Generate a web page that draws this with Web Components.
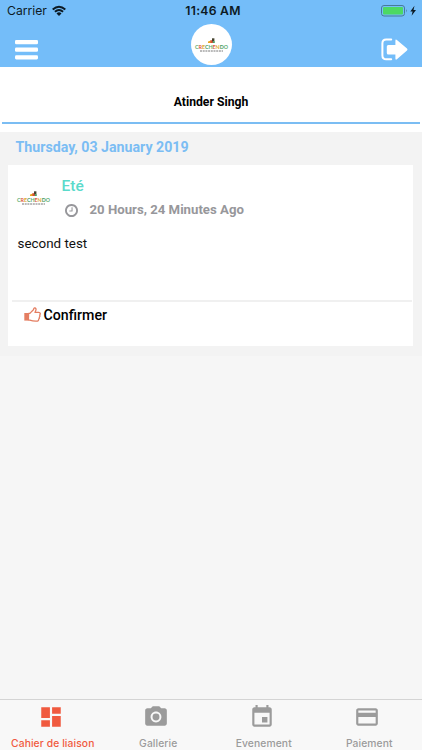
<!DOCTYPE html>
<html lang="fr">
<head>
<meta charset="utf-8">
<title>Crechendo</title>
<style>
body {
	margin: 0;
	font-family: Roboto, sans-serif;
	background: #f6f6f6;
}
</style>
</head>
<body>
<cr-screen>
	<cr-header slot="header" carrier="Carrier" time="11:46 AM"></cr-header>
	<cr-child-tab>Atinder Singh</cr-child-tab>
	<cr-day date="Thursday, 03 January 2019">
		<cr-post name="Eté" ago="20 Hours, 24 Minutes Ago" action="Confirmer">second test</cr-post>
	</cr-day>
	<cr-tabs slot="footer">
		<cr-tab icon="dashboard" active>Cahier de liaison</cr-tab>
		<cr-tab icon="camera">Gallerie</cr-tab>
		<cr-tab icon="event">Evenement</cr-tab>
		<cr-tab icon="card">Paiement</cr-tab>
	</cr-tabs>
</cr-screen>

<script>
(() => {
	const ICONS = {
		wifi: `<svg viewBox="0 0 14 10"><path d="M0.7 3.5Q7-2.1 13.3 3.5M2.9 5.8Q7 2.2 11.1 5.8" fill="none" stroke="currentColor" stroke-width="1.9"/><path d="M4.5 7.4Q7 5.3 9.5 7.4L7 10z"/></svg>`,
		battery: `<svg viewBox="0 0 36 12"><rect x=".5" y=".5" width="23" height="10.5" rx="2.5" fill="none" stroke="#477b99"/><rect x="2" y="2" width="20" height="7.5" rx="1" fill="#4cd964"/><path d="M25 4q1.5 1.7 0 3.5z" fill="#477b99"/><path d="M33.5.8 29.3 6.4h2.3l-1 4.4 4.4-5.8h-2.5z"/></svg>`,
		menu: `<svg viewBox="0 0 23 20"><rect width="23" height="4.2" rx="1.3"/><rect y="7.6" width="23" height="4.2" rx="1.3"/><rect y="15.2" width="23" height="4.2" rx="1.3"/></svg>`,
		logout: `<svg viewBox="0 0 27 23"><path d="M10.2 1.6H5.2Q1.4 1.6 1.4 5.4v12Q1.4 21.2 5.2 21.2h5" fill="none" stroke="currentColor" stroke-width="2" stroke-linecap="round"/><path d="M5.8 8.4q0-1.5 1.5-1.5h7.1V2.8q0-2 1.5-.8L26 10.4q1 1 0 2l-10.1 8.9q-1.5 1-1.5-.8v-4.1H7.3q-1.5 0-1.5-1.5z"/></svg>`,
		clock: `<svg viewBox="128 128 1536 1536"><path d="M1024 544v448q0 14-9 23t-23 9h-320q-14 0-23-9t-9-23v-64q0-14 9-23t23-9h224v-352q0-14 9-23t23-9h64q14 0 23 9t9 23zm416 352q0-148-73-273t-198-198-273-73-273 73-198 198-73 273 73 273 198 198 273 73 273-73 198-198 73-273zm224 0q0 209-103 385.5t-279.5 279.5-385.5 103-385.5-103-279.5-279.5-103-385.5 103-385.5 279.5-279.5 385.5-103 385.5 103 279.5 279.5 103 385.5z"/></svg>`,
		thumb: `<svg viewBox="0 0 17 15"><path d="M.3 6h3.9v7.6H.3z"/><path d="M4.6 6.4h1.2c1.4-1 2-2.3 3.4-3.4.6-.6.4-2.1 1.3-2.2 1.6-.1 1.8 1.6 1.3 2.7l-.8 1.9h3.8c1.7 0 2 2 .8 2.6.6.8.4 1.7-.3 2.2.3.8.1 1.5-.6 1.9.1 1.5-.8 2-2.2 2-3.1.1-4.7-.3-6.7-1H4.4z" fill="none" stroke="currentColor" stroke-width="1.3" stroke-linejoin="round"/></svg>`,
		dashboard: `<svg viewBox="0 0 24 24"><path d="M3 13h8V3H3v10zm0 8h8v-6H3v6zm10 0h8V11h-8v10zm0-18v6h8V3h-8z"/></svg>`,
		camera: `<svg viewBox="0 0 24 24"><circle cx="12" cy="12" r="3.2"/><path d="M9 2 7.17 4H4c-1.1 0-2 .9-2 2v12c0 1.1.9 2 2 2h16c1.1 0 2-.9 2-2V6c0-1.1-.9-2-2-2h-3.17L15 2H9zm3 15c-2.76 0-5-2.24-5-5s2.24-5 5-5 5 2.24 5 5-2.24 5-5 5z"/></svg>`,
		event: `<svg viewBox="0 0 24 24"><path d="M17 12h-5v5h5v-5zM16 1v2H8V1H6v2H5c-1.11 0-1.99.9-1.99 2L3 19c0 1.1.89 2 2 2h14c1.1 0 2-.9 2-2V5c0-1.1-.9-2-2-2h-1V1h-2zm3 18H5V8h14v11z"/></svg>`,
		card: `<svg viewBox="0 0 24 24"><path d="M20 4H4c-1.11 0-1.99.89-1.99 2L2 18c0 1.11.89 2 2 2h16c1.11 0 2-.89 2-2V6c0-1.11-.89-2-2-2zm0 14H4v-6h16v6zm0-10H4V6h16v2z"/></svg>`,
	};

	/**
	 * Register an element whose shadow root is rendered once from its attributes.
	 * @param {string} tag
	 * @param {(el: HTMLElement) => string} render
	 */
	function define(tag, render) {
		customElements.define(
			tag,
			class extends HTMLElement {
				constructor() {
					super();
					this.attachShadow({ mode: "open" });
				}

				connectedCallback() {
					const template = document.createElement("template");
					template.innerHTML = render(this);
					this.shadowRoot.replaceChildren(template.content.cloneNode(true));
				}
			},
		);
	}

	define("cr-icon", (el) => `
<style>
:host { display: block; flex: none; }
svg { display: block; width: 100%; height: 100%; fill: currentColor; overflow: visible; }
</style>
${ICONS[el.getAttribute("name")] || ""}`);

	define("cr-logo", () => `
<style>
:host { display: block; width: 33px; height: 14px; flex: none; }
svg { display: block; width: 33px; height: 14px; overflow: visible; }
text { font: 700 6.4px Lato, sans-serif; }
</style>
<svg viewBox="0 0 33 14">
	<path d="M13 5V3.4l3-1V5z" fill="#e9a51e"/>
	<path d="M15.5 5V2l2.5.6V5z" fill="#d94d37"/>
	<path d="M17 3.4V.3h2.4v3.1z" fill="#45432f"/>
	<path d="M17.8 3.2h2V5h-2z" fill="#469e65"/>
	<text y="10.6" textLength="33" lengthAdjust="spacingAndGlyphs">${[..."CRECHENDO"].map((c, i) => `<tspan fill="${["#5fae72", "#df5a40", "#dba92c", "#3f9a62"][i % 4]}">${c}</tspan>`).join("")}</text>
	<path d="M5 13h23" stroke="#777" stroke-width="1" stroke-dasharray="2 .7"/>
</svg>`);

	define("cr-screen", () => `
<style>
:host { display: flex; flex-direction: column; height: 750px; overflow: hidden; }
main { flex: 1; min-height: 0; }
</style>
<slot name="header"></slot>
<main><slot></slot></main>
<slot name="footer"></slot>`);

	define("cr-header", (el) => `
<style>
:host { display: block; height: 67px; background: #74bdf9; }
.status, .nav { display: grid; grid-template-columns: 1fr auto 1fr; align-items: center; }
.status { height: 22px; padding: 0 5px 0 7px; font: 12.2px/22px Inter, sans-serif; color: #0c1a24; }
.left { display: flex; align-items: center; gap: 5px; }
.wifi { width: 14px; height: 10px; }
.time { font-weight: 600; letter-spacing: .25px; padding-left: 2px; }
.battery { width: 36px; height: 12px; justify-self: end; color: #0c1a24; }
.nav { height: 45px; padding: 0 14px 0 15px; color: #fff; }
.menu { width: 23px; height: 20px; margin-top: 10px; }
.disc { display: flex; align-items: center; justify-content: center; width: 41px; height: 41px; border-radius: 50%; background: #fff; }
.logout { width: 27px; height: 23px; justify-self: end; margin-top: 9px; }
</style>
<div class="status">
	<div class="left"><span>${el.getAttribute("carrier")}</span><cr-icon class="wifi" name="wifi"></cr-icon></div>
	<span class="time">${el.getAttribute("time")}</span>
	<cr-icon class="battery" name="battery"></cr-icon>
</div>
<div class="nav">
	<cr-icon class="menu" name="menu"></cr-icon>
	<div class="disc"><cr-logo></cr-logo></div>
	<cr-icon class="logout" name="logout"></cr-icon>
</div>`);

	define("cr-child-tab", () => `
<style>
:host { display: block; box-sizing: border-box; height: 65px; padding: 2px 2px 0; background: #fff; }
div {
	height: 55px;
	padding-top: 12px;
	box-sizing: border-box;
	border-bottom: 2px solid #7bbdf3;
	display: flex;
	align-items: center;
	justify-content: center;
	font: 700 12.2px/16px Roboto, sans-serif;
	color: #000;
}
</style>
<div><slot></slot></div>`);

	define("cr-day", (el) => `
<style>
:host { display: block; box-sizing: border-box; height: 224px; padding: 0 9px 0 8px; background: #f3f3f3; }
h2 { margin: 0; padding: 0 7.5px; font: 700 14.2px/31px Roboto, sans-serif; height: 33px; color: #7bbdf3; }
</style>
<h2>${el.getAttribute("date")}</h2>
<slot></slot>`);

	define("cr-post", (el) => `
<style>
:host { display: flex; flex-direction: column; height: 181px; background: #fff; }
.head { display: flex; padding: 12px 9px 0; gap: 11.5px; }
cr-logo { margin-top: 14px; }
.name { font: 500 15.5px/19px Roboto, sans-serif; color: #5bdacb; }
.ago { display: flex; align-items: center; gap: 12px; margin-top: 5px; padding-left: 3px; font: 700 13.2px/18px Roboto, sans-serif; color: #97979b; }
.clock { width: 13px; height: 13px; }
.body { flex: 1; padding: 15px 9.5px 0; font-size: 13.4px; line-height: 19px; color: #111; }
.foot { display: flex; gap: 2.5px; box-sizing: border-box; height: 46px; margin: 0 1px 0 4px; padding: 5px 12px 0; border-top: 2px solid #f0f0f0; font: 500 14.2px/17px Roboto, sans-serif; color: #000; }
.thumb { width: 17px; height: 15px; color: #e47e62; }
</style>
<div class="head">
	<cr-logo></cr-logo>
	<div>
		<div class="name">${el.getAttribute("name")}</div>
		<div class="ago"><cr-icon class="clock" name="clock"></cr-icon><span>${el.getAttribute("ago")}</span></div>
	</div>
</div>
<div class="body"><slot></slot></div>
<div class="foot"><cr-icon class="thumb" name="thumb"></cr-icon><span>${el.getAttribute("action")}</span></div>`);

	define("cr-tabs", () => `
<style>
:host { display: grid; grid-template-columns: repeat(4, 1fr); box-sizing: border-box; height: 51px; border-top: 1px solid #d4d4d4; background: #f8f8f8; }
</style>
<slot></slot>`);

	define("cr-tab", (el) => `
<style>
:host { display: flex; flex-direction: column; align-items: center; padding-top: 3.5px; font: 500 10.3px/14px Inter, sans-serif; letter-spacing: .1px; color: #9b9b9b; }
:host([active]) { color: #f05a3f; }
cr-icon { width: 26px; height: 26px; margin: 0 4px 6px 0; }
</style>
<cr-icon name="${el.getAttribute("icon")}"></cr-icon>
<span><slot></slot></span>`);
})();
</script>
</body>
</html>
